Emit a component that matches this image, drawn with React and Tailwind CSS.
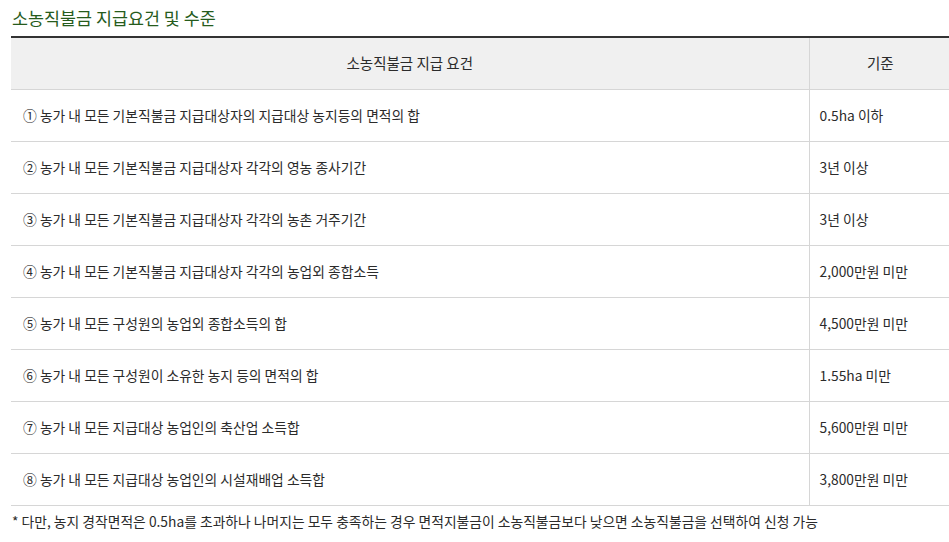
const rows = [
  ['① 농가 내 모든 기본직불금 지급대상자의 지급대상 농지등의 면적의 합', '0.5ha 이하'],
  ['② 농가 내 모든 기본직불금 지급대상자 각각의 영농 종사기간', '3년 이상'],
  ['③ 농가 내 모든 기본직불금 지급대상자 각각의 농촌 거주기간', '3년 이상'],
  ['④ 농가 내 모든 기본직불금 지급대상자 각각의 농업외 종합소득', '2,000만원 미만'],
  ['⑤ 농가 내 모든 구성원의 농업외 종합소득의 합', '4,500만원 미만'],
  ['⑥ 농가 내 모든 구성원이 소유한 농지 등의 면적의 합', '1.55ha 미만'],
  ['⑦ 농가 내 모든 지급대상 농업인의 축산업 소득합', '5,600만원 미만'],
  ['⑧ 농가 내 모든 지급대상 농업인의 시설재배업 소득합', '3,800만원 미만'],
];

export default function App() {
  return (
    <div className="w-[949px] h-[542px] overflow-hidden bg-white text-[#2b2b2b] font-['Noto_Sans_CJK_KR','Noto_Sans',sans-serif]">
      <h2 className="pl-[12px] pt-[4px] h-[36px] text-[17.4px] leading-[27px] text-[#265b1c]">
        소농직불금 지급요건 및 수준
      </h2>

      <div className="ml-[11px] w-[940px] border-t-2 border-[#333]">
        <table className="w-full border-collapse text-[13.8px]">
          <thead>
            <tr className="h-[51px] bg-[#f0f0f0] border-b border-[#d6d6d6]">
              <th className="w-[798px] font-normal text-[14.5px] text-center border-r border-[#d6d6d6]">소농직불금 지급 요건</th>
              <th className="font-normal text-[14.5px] text-center">기준</th>
            </tr>
          </thead>
          <tbody>
            {rows.map(([req, std]) => (
              <tr key={req} className="h-[52px] border-b border-[#d6d6d6]">
                <td className="pl-[12px] border-r border-[#d6d6d6]">{req}</td>
                <td className="pl-[10px]">{std}</td>
              </tr>
            ))}
          </tbody>
        </table>
      </div>

      <p className="pl-[12px] pt-[5px] text-[13.8px]">
        * 다만, 농지 경작면적은 0.5ha를 초과하나 나머지는 모두 충족하는 경우 면적지불금이 소농직불금보다 낮으면 소농직불금을 선택하여 신청 가능
      </p>
    </div>
  );
}
